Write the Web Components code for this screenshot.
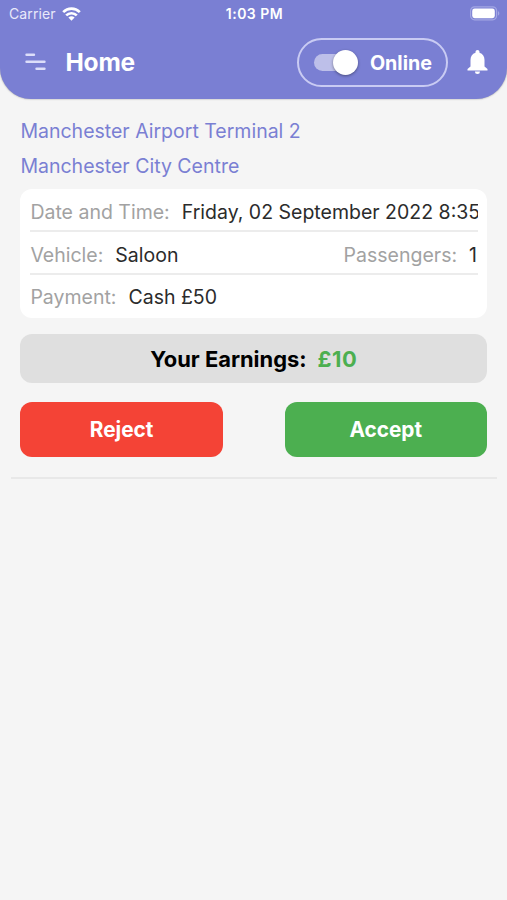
<!DOCTYPE html>
<html lang="en">
	<head>
		<meta charset="UTF-8" />
		<meta name="viewport" content="width=device-width, initial-scale=1.0" />
		<title>Home</title>
		<style>
			body {
				margin: 0;
				height: 100vh;
				overflow: hidden;
				background: #f5f5f5;
				font-family: Inter, 'Liberation Sans', sans-serif;
				font-size: 19.5px;
				color: #2b2b2b;
			}
		</style>
	</head>
	<body>
		<template id="status-tmpl">
			<style>
				:host {
					display: grid;
					grid-template-columns: 1fr auto 1fr;
					align-items: center;
					height: 27px;
					padding: 0 7px 0 9px;
					font-size: 14px;
				}
				.left {
					display: flex;
					align-items: center;
					gap: 6px;
					letter-spacing: 0.1px;
					color: #e9e9fa;
				}
				.time {
					font-weight: 600;
					letter-spacing: 0.5px;
				}
				.battery {
					justify-self: end;
				}
				svg {
					display: block;
				}
			</style>
			<div class="left">
				<slot name="carrier"></slot>
				<svg width="19" height="14" viewBox="0 0 19 14" fill="none" stroke="#fff" stroke-width="2.7">
					<path d="M1.2 5.1a11.8 11.8 0 0 1 16.6 0" />
					<path d="M4.2 8.4a7.6 7.6 0 0 1 10.6 0" />
					<path d="M9.5 13.8 6.4 10.6a4.5 4.5 0 0 1 6.2 0z" fill="#fff" stroke="none" />
				</svg>
			</div>
			<div class="time"><slot></slot></div>
			<svg class="battery" width="30" height="15" viewBox="0 0 30 15">
				<rect x="0.6" y="0.8" width="26" height="13" rx="4" fill="none" stroke="#a3a7e4" stroke-width="1.2" />
				<rect x="2.2" y="2.6" width="22.6" height="9.6" rx="2.4" fill="#fff" />
				<path d="M28 5.2v4.4c1.8-.6 1.8-3.8 0-4.4z" fill="#a3a7e4" />
			</svg>
		</template>

		<template id="header-tmpl">
			<style>
				:host {
					display: block;
					height: 99px;
					background: #7a7fd3;
					color: #fff;
					border-radius: 0 0 31px 31px;
					box-shadow: 0 0 2px rgba(0, 0, 0, 0.4);
				}
				.bar {
					display: flex;
					align-items: center;
					height: 70px;
					padding: 0 18px 0 25px;
				}
				.title {
					flex: 1;
					margin-left: 19.5px;
					font-size: 24.5px;
					font-weight: 700;
					letter-spacing: -0.2px;
				}
				.bell {
					margin-left: 18px;
				}
				svg {
					display: block;
				}
			</style>
			<slot name="status"></slot>
			<div class="bar">
				<svg width="21" height="18" viewBox="0 0 21 18" stroke="#dcdefa" stroke-width="2.4" stroke-linecap="round">
					<path d="M1.5 1.8h7.5M1.5 8.8h18M11.5 15.700h8" />
				</svg>
				<div class="title"><slot></slot></div>
				<slot name="action"></slot>
				<svg class="bell" width="23" height="26" viewBox="0 0 23 26" fill="#fff">
					<path d="M11.5 1c-1.2 0-2 .9-2 2v.8C6.1 4.7 4.5 7.6 4.5 11v6.4L1.5 20v1.5h20V20l-3-2.6V11c0-3.400-1.600-6.300-5-7.200V3c0-1.100-.8-2-2-2z" />
					<path d="M9 22.600h5a2.500 2.500 0 0 1-5 0z" />
				</svg>
			</div>
		</template>

		<template id="toggle-tmpl">
			<style>
				:host {
					display: flex;
					align-items: center;
					box-sizing: border-box;
					width: 151px;
					height: 49px;
					padding: 0 14px 0 15px;
					justify-content: space-between;
					border: 2px solid #c9cbf3;
					border-radius: 25px;
					font-weight: 700;
					font-size: 19.7px;
				}
				.track {
					display: flex;
					align-items: center;
					justify-content: flex-end;
					width: 41px;
					height: 17px;
					border-radius: 9px;
					background: #bdbfe9;
				}
				.thumb {
					flex: none;
					width: 25px;
					height: 25px;
					margin-right: -3px;
					border-radius: 50%;
					background: #fff;
					box-shadow: 0 1px 3px rgba(0, 0, 0, 0.4);
				}
				.text {
					padding-top: 2px;
				}
			</style>
			<div class="track"><div class="thumb"></div></div>
			<div class="text"><slot></slot></div>
		</template>

		<template id="job-tmpl">
			<style>
				:host {
					display: block;
					margin: 0 10px 0 11px;
					padding: 15px 10px 20px 9.4px;
					border-bottom: 2px solid #e8e8e8;
				}
				.route {
					display: flex;
					flex-direction: column;
					line-height: 35px;
					color: #7a7fd3;
				}
				.details {
					margin-top: 5px;
					padding: 0 9px 0 10px;
					border-radius: 12px;
					background: #fff;
				}
				.earnings {
					display: flex;
					align-items: center;
					justify-content: center;
					gap: 11px;
					height: 49px;
					margin-top: 16px;
					border-radius: 12px;
					background: #dfdfdf;
					color: #000;
					font-size: 21.9px;
					font-weight: 700;
				}
				.earnings ::slotted(.amount) {
					color: #4caf50;
					letter-spacing: 0.5px;
				}
				.actions {
					display: flex;
					justify-content: space-between;
					margin-top: 19px;
				}
			</style>
			<div class="route">
				<slot name="from"></slot>
				<slot name="to"></slot>
			</div>
			<div class="details"><slot></slot></div>
			<div class="earnings"><slot name="earnings"></slot></div>
			<div class="actions"><slot name="actions"></slot></div>
		</template>

		<template id="row-tmpl">
			<style>
				:host {
					display: flex;
					justify-content: space-between;
					height: 41px;
					line-height: 46px;
					overflow: hidden;
					border-bottom: 2px solid #ececec;
				}
				:host([last]) {
					height: 43px;
					line-height: 44px;
					border-bottom: 0;
				}
			</style>
			<slot></slot>
		</template>

		<template id="field-tmpl">
			<style>
				:host {
					display: flex;
					gap: 12px;
					padding-right: 1px;
					white-space: nowrap;
				}
				.label {
					color: #a2a2a2;
				}
			</style>
			<span class="label"><slot name="label"></slot></span>
			<span><slot></slot></span>
		</template>

		<template id="button-tmpl">
			<style>
				:host {
					display: block;
					width: 202.5px;
				}
				button {
					display: block;
					width: 100%;
					height: 55px;
					padding: 0;
					border: 0;
					border-radius: 12px;
					background: var(--button-bg);
					color: #fff;
					font: 700 20.8px Inter, 'Liberation Sans', sans-serif;
				}
			</style>
			<button><slot></slot></button>
		</template>

		<script>
			const define = (name, id) =>
				customElements.define(
					name,
					class extends HTMLElement {
						connectedCallback() {
							this.attachShadow({ mode: 'open' }).append(
								document.getElementById(id).content.cloneNode(true),
							);
						}
					},
				);

			define('status-bar', 'status-tmpl');
			define('app-header', 'header-tmpl');
			define('online-toggle', 'toggle-tmpl');
			define('job-card', 'job-tmpl');
			define('job-row', 'row-tmpl');
			define('job-field', 'field-tmpl');
			define('job-button', 'button-tmpl');
		</script>

		<app-header>
			<status-bar slot="status"><span slot="carrier">Carrier</span>1:03 PM</status-bar>
			Home
			<online-toggle slot="action">Online</online-toggle>
		</app-header>

		<job-card>
			<span slot="from">Manchester Airport Terminal 2</span>
			<span slot="to">Manchester City Centre</span>
			<job-row>
				<job-field><span slot="label">Date and Time:</span>Friday, 02 September 2022 8:35</job-field>
			</job-row>
			<job-row>
				<job-field><span slot="label">Vehicle:</span>Saloon</job-field>
				<job-field><span slot="label">Passengers:</span>1</job-field>
			</job-row>
			<job-row last>
				<job-field><span slot="label">Payment:</span>Cash £50</job-field>
			</job-row>
			<span slot="earnings">Your Earnings:</span>
			<span slot="earnings" class="amount">£10</span>
			<job-button slot="actions" style="--button-bg: #f44336">Reject</job-button>
			<job-button slot="actions" style="--button-bg: #4caf50">Accept</job-button>
		</job-card>
	</body>
</html>
